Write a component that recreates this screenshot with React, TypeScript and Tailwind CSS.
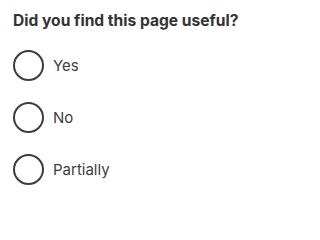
import { useState } from 'react'

const options = ['Yes', 'No', 'Partially']

export default function App() {
    const [choice, setChoice] = useState<string | null>(null)

    return (
        <div className="w-[260px] h-[205px] bg-white px-[13px] pt-[10px] font-['Inter',sans-serif]">
            <h2 className="text-[15.6px] leading-[22px] font-bold text-[#333333]">Did you find this page useful?</h2>
            <div className="mt-[18px] flex flex-col gap-[21px]">
                {options.map((o) => (
                    <label key={o} className="flex items-center gap-[9px] cursor-pointer" onClick={() => setChoice(o)}>
                        <span className="w-[31px] h-[31px] rounded-full border-2 border-[#3d3d3d] flex items-center justify-center">
                            {choice === o && <span className="w-[15px] h-[15px] rounded-full bg-[#3d3d3d]" />}
                        </span>
                        <span className="text-[15px] leading-[30px] text-[#3d3d3d]">{o}</span>
                    </label>
                ))}
            </div>
        </div>
    )
}
